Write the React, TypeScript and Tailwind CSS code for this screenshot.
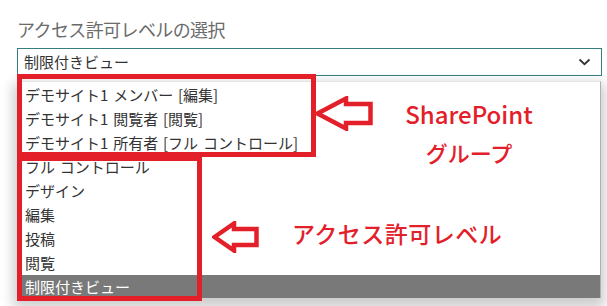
import React from "react";

const items = [
  "デモサイト1 メンバー [編集]",
  "デモサイト1 閲覧者 [閲覧]",
  "デモサイト1 所有者 [フル コントロール]",
  "フル コントロール",
  "デザイン",
  "編集",
  "投稿",
  "閲覧",
];

function Arrow({ w, h, headW, shaftH }: { w: number; h: number; headW: number; shaftH: number }) {
  const s = 2.5;
  const cy = h / 2;
  const pts = [
    [s, cy],
    [headW, s],
    [headW, cy - shaftH / 2],
    [w - s, cy - shaftH / 2],
    [w - s, cy + shaftH / 2],
    [headW, cy + shaftH / 2],
    [headW, h - s],
  ]
    .map((p) => p.join(","))
    .join(" ");
  return (
    <svg width={w} height={h} viewBox={`0 0 ${w} ${h}`} className="shrink-0">
      <polygon points={pts} fill="white" stroke="#e3202a" strokeWidth={4.5} strokeLinejoin="miter" />
    </svg>
  );
}

export default function App() {
  return (
    <div
      className="relative w-[607px] h-[306px] overflow-hidden bg-white"
      style={{ fontFamily: '"Noto Sans CJK JP", "Noto Sans", sans-serif' }}
    >
      <div className="flex flex-col pl-[17px] pr-[5px] pt-[15px]">
        <div className="h-[33px] text-[18px] leading-[28px] text-[#6b6b6b] tracking-[-0.6px]">
          アクセス許可レベルの選択
        </div>
        <div className="flex h-[28px] items-center justify-between border border-[#35807f] pl-[6px] pr-[10px] text-[15px] text-[#333]">
          <span>制限付きビュー</span>
          <svg width="13" height="8" viewBox="0 0 13 8">
            <path d="M1.5 1.5 L6.5 6.2 L11.5 1.5" fill="none" stroke="#333" strokeWidth="1.8" />
          </svg>
        </div>
        <div className="mt-[5px] mr-px flex flex-col border-t border-[#e4e4e4] border-r border-r-[#b0b0b0] bg-white pt-px shadow-[0_6px_12px_4px_rgba(0,0,0,0.2)]">
          {items.map((t) => (
            <div
              key={t}
              className="h-[24px] pl-[8px] text-[15px] leading-[24px] text-[#333] [word-spacing:1.5px] whitespace-nowrap"
            >
              {t}
            </div>
          ))}
          <div className="h-[23px] bg-[#797979] pl-[8px] text-[15px] leading-[23px] text-white">
            制限付きビュー
          </div>
        </div>
      </div>

      {/* annotation: SharePoint group */}
      <div className="absolute left-[17px] top-[74px] flex items-start">
        <div className="h-[83px] w-[299px] shrink-0 border-[5px] border-[#e3202a]" />
        <div className="mt-[22px] -ml-px">
          <Arrow w={58} h={35} headW={31} shaftH={19} />
        </div>
        <div className="ml-[27px] mt-[23px] flex w-[138px] flex-col items-center font-medium text-[#e3202a]">
          <span className="text-[24px] leading-[34px]">SharePoint</span>
          <span className="mt-[4px] text-[22px] leading-[34px]">グループ</span>
        </div>
      </div>

      {/* annotation: permission levels */}
      <div className="absolute left-[17px] top-[156px] flex items-start">
        <div className="h-[145px] w-[185px] shrink-0 border-[5px] border-[#e3202a]" />
        <div className="ml-[10px] mt-[65px]">
          <Arrow w={47} h={32} headW={22} shaftH={16} />
        </div>
        <span className="ml-[33px] mt-[60px] whitespace-nowrap text-[23px] font-medium leading-[34px] tracking-[0.5px] text-[#e3202a]">
          アクセス許可レベル
        </span>
      </div>
    </div>
  );
}
